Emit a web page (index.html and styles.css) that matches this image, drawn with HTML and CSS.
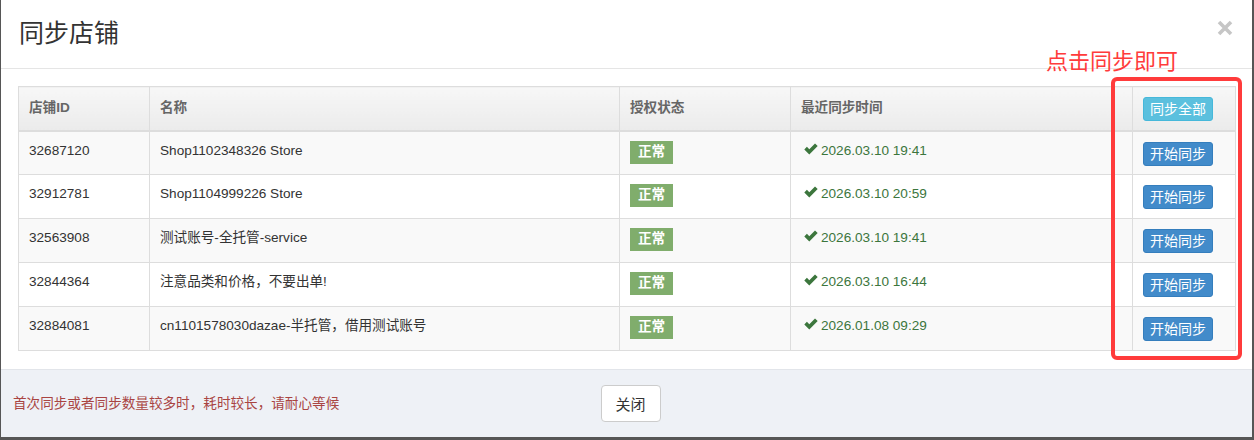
FILE: index.html
```html
<!DOCTYPE html>
<html lang="zh-CN">
<head>
    <meta charset="UTF-8">
    <meta name="viewport" content="width=device-width, initial-scale=1.0">
    <title>同步店铺</title>
    <link rel="stylesheet" href="styles.css">
</head>
<body>
    <div class="modal">
        <div class="modal-header">
            <h4 class="modal-title">同步店铺</h4>
            <button class="close" type="button" aria-label="关闭">
                <svg width="16" height="16" viewBox="0 0 16 16">
                    <path d="M2 2 L14 14 M14 2 L2 14" stroke="#c6c6c6" stroke-width="3.6" fill="none"/>
                </svg>
            </button>
        </div>

        <div class="modal-body">
            <table class="shop-table">
                <colgroup>
                    <col style="width: 131px">
                    <col style="width: 470px">
                    <col style="width: 171px">
                    <col style="width: 342px">
                    <col style="width: 103px">
                </colgroup>
                <thead>
                    <tr>
                        <th>店铺ID</th>
                        <th>名称</th>
                        <th>授权状态</th>
                        <th>最近同步时间</th>
                        <th><button class="btn btn-info">同步全部</button></th>
                    </tr>
                </thead>
                <tbody id="shop-rows"></tbody>
            </table>
        </div>

        <div class="modal-footer">
            <span class="hint">首次同步或者同步数量较多时，耗时较长，请耐心等候</span>
            <button class="btn-close" type="button">关闭</button>
            <span></span>
        </div>

        <div class="note">点击同步即可</div>
        <div class="note-box"></div>
    </div>

    <script>
        const shops = [
            { id: '32687120', name: 'Shop1102348326 Store', time: '2026.03.10 19:41' },
            { id: '32912781', name: 'Shop1104999226 Store', time: '2026.03.10 20:59' },
            { id: '32563908', name: '测试账号-全托管-service', time: '2026.03.10 19:41' },
            { id: '32844364', name: '注意品类和价格，不要出单!', time: '2026.03.10 16:44' },
            { id: '32884081', name: 'cn1101578030dazae-半托管，借用测试账号', time: '2026.01.08 09:29' }
        ];

        const checkIcon = '<svg class="ok" width="14" height="12" viewBox="0 0 14 12">' +
            '<path d="M0.3 6.4 L2.9 3.8 L5.3 6.2 L11 0.4 L13.7 3 L5.3 11.4 Z" fill="#3c763d"/></svg>';

        const rows = shops.map(shop => `
            <tr>
                <td>${shop.id}</td>
                <td>${shop.name}</td>
                <td><span class="label">正常</span></td>
                <td class="sync-time">${checkIcon}${shop.time}</td>
                <td><button class="btn btn-primary">开始同步</button></td>
            </tr>`).join('');

        document.getElementById('shop-rows').innerHTML = rows;
    </script>
</body>
</html>
```

FILE: styles.css
```css
* {
    margin: 0;
    padding: 0;
    box-sizing: border-box;
}

body {
    font-family: 'Liberation Sans', 'Noto Sans CJK SC', sans-serif;
    font-size: 13.6px;
    color: #333;
    background: #565656;
    width: 1254px;
    height: 440px;
    overflow: hidden;
}

.modal {
    position: relative;
    margin-left: 1px;
    width: 1251px;
    height: 437px;
    background: #fff;
    display: flex;
    flex-direction: column;
}

.modal-header {
    height: 69px;
    padding: 0 19px 6px 18px;
    border-bottom: 1px solid #e5e5e5;
    display: flex;
    justify-content: space-between;
    align-items: center;
}

.modal-title {
    font-size: 25px;
    font-weight: normal;
    color: #333;
}

.close {
    background: none;
    border: none;
    display: flex;
    margin-top: -6px;
}

.modal-body {
    padding: 17px 16px 18px 17px;
}

.shop-table {
    width: 1217px;
    border-collapse: collapse;
    table-layout: fixed;
}

.shop-table th,
.shop-table td {
    border: 1px solid #ddd;
    padding: 8px 10px;
    text-align: left;
    vertical-align: top;
    line-height: 20px;
}

.shop-table th {
    height: 44px;
    padding-top: 11px;
    font-weight: bold;
    color: #666;
    background: linear-gradient(to bottom, #f7f7f7, #ebebeb);
    border-bottom: 2px solid #ddd;
}

.shop-table td {
    height: 44px;
    padding-top: 9px;
}

.shop-table tbody tr:nth-child(odd) td {
    background: #f9f9f9;
}

.label {
    display: inline-block;
    padding: 1px 8px 2px;
    background: #80ad6c;
    color: #fff;
    font-weight: bold;
    line-height: 20px;
}

.sync-time {
    color: #3c763d;
    padding-left: 13px !important;
}

.ok {
    margin-right: 3px;
}

.btn {
    display: inline-block;
    font-family: inherit;
    font-size: 14px;
    line-height: 18px;
    height: 24px;
    padding: 2px 6px;
    border-radius: 3px;
    color: #fff;
    cursor: pointer;
}

.shop-table th .btn {
    margin-top: -1px;
}

.shop-table td .btn {
    margin-top: 1px;
}

.btn-info {
    background: #5bc0de;
    border: 1px solid #46b8da;
}

.btn-primary {
    background: #428bca;
    border: 1px solid #357ebd;
}

.modal-footer {
    flex: 1;
    background: #eef1f6;
    border-top: 1px solid #e2e5ea;
    padding: 0 0 0 12px;
    display: grid;
    grid-template-columns: 1fr auto 1fr;
    align-items: center;
}

.hint {
    color: #a94442;
    justify-self: start;
    margin-top: -4px;
}

.btn-close {
    font-family: inherit;
    font-size: 15px;
    color: #333;
    background: #fff;
    border: 1px solid #ccc;
    border-radius: 4px;
    width: 60px;
    height: 37px;
    margin-left: -4px;
    cursor: pointer;
}

.note {
    position: absolute;
    left: 1045px;
    top: 43px;
    font-size: 22px;
    color: #ff3b3b;
}

.note-box {
    position: absolute;
    left: 1110px;
    top: 77px;
    width: 131px;
    height: 283px;
    border: 4px solid #ff3b3b;
    border-radius: 6px;
}
```
